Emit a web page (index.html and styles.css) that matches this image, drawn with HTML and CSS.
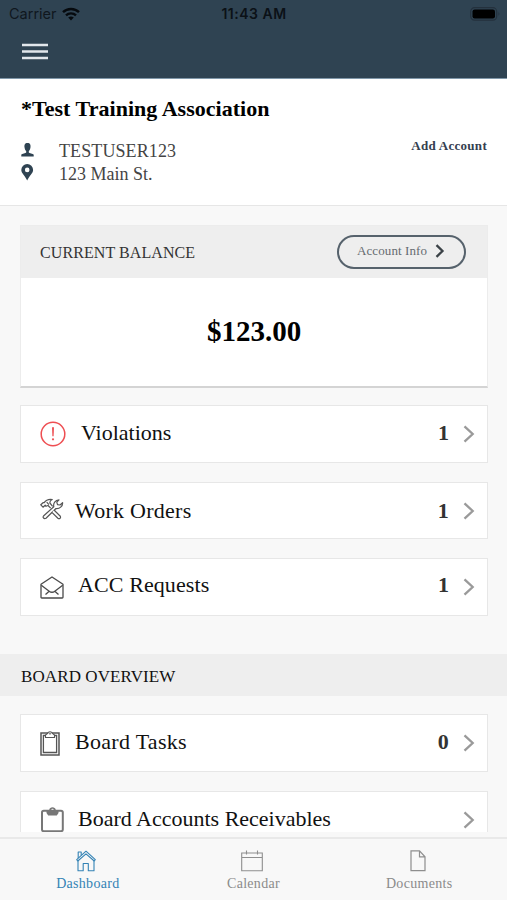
FILE: index.html
```html
<!DOCTYPE html>
<html lang="en">
<head>
<meta charset="utf-8">
<title>Dashboard</title>
<link rel="stylesheet" href="styles.css">
</head>
<body>
<div class="app">
  <header class="topbar">
    <div class="status">
      <div class="carrier"><span>Carrier</span>
        <svg width="18" height="14" viewBox="0 0 18 14"><g fill="none" stroke="#060a0e" stroke-width="2.4"><path d="M1 5.2C5.4.9 12.6.9 17 5.2"/><path d="M4 8.4C6.8 5.7 11.2 5.7 14 8.4"/></g><path d="M6.2 10.6Q9 8.2 11.8 10.6L9 13.6z" fill="#060a0e"/></svg>
      </div>
      <div class="clock">11:43 AM</div>
      <div class="power"><svg width="32" height="14" viewBox="0 0 32 14"><rect x="1.700" y=".7" width="26" height="12.4" rx="3.8" fill="none" stroke="#24313d" stroke-width="1.2"/><rect x="3.500" y="2.4" width="22.500" height="9" rx="2.2" fill="#000"/><path d="M29.500 4.8q1.8 2 0 4.2z" fill="#24313d"/></svg></div>
    </div>
    <button class="menu" aria-label="Menu"><svg width="26" height="18" viewBox="0 0 26 18"><path d="M0 2H26M0 8.500H26M0 15H26" stroke="#e2e7ec" stroke-width="2.700"/></svg></button>
  </header>

  <main class="content">
    <section class="profile">
      <div class="details">
        <h1>*Test Training Association</h1>
        <div class="line user"><svg width="13" height="14" viewBox="0 0 13 14"><path d="M6.5 0C3.7 0 3.3 2 3.5 4.2 3.7 6.200 4.500 7.300 5.200 8.200V9.600C4.800 10.500 1 10.600.3 11.700V13.500H12.700V11.700C12 10.600 8.200 10.500 7.800 9.600V8.200C8.500 7.300 9.300 6.200 9.500 4.200 9.700 2 9.300 0 6.500 0z" fill="#2f4352"/></svg><span>TESTUSER123</span></div>
        <div class="line address"><svg width="13" height="17" viewBox="0 0 13 17"><path fill-rule="evenodd" d="M6.200 0A5.900 5.900 0 0 0 .3 5.900C.3 9.300 4.300 11.700 6.200 16.500 8.100 11.700 12.100 9.300 12.100 5.900A5.900 5.900 0 0 0 6.200 0zM6.200 3.600a2.300 2.300 0 1 1 0 4.600 2.300 2.300 0 0 1 0-4.600z" fill="#2f4352"/></svg><span>123 Main St.</span></div>
      </div>
      <a class="add">Add Account</a>
    </section>

    <section class="balance">
      <div class="balance-head">
        <h2>CURRENT BALANCE</h2>
        <a class="info"><span>Account Info</span><svg width="10" height="14" viewBox="0 0 10 14"><path d="M1.500 1.200 7.500 7 1.500 12.800" fill="none" stroke="#3b4247" stroke-width="2.300"/></svg></a>
      </div>
      <div class="amount">$123.00</div>
    </section>

    <ul class="rows summary">
      <li class="row violations">
        <svg class="icon" width="26" height="26" viewBox="0 0 26 26"><circle cx="13" cy="13" r="11.800" fill="none" stroke="#ee4e52" stroke-width="1.500"/><path d="M12 6.300h2l-.4 9h-1.200z" fill="#ee4e52"/><circle cx="13" cy="18.300" r="1.100" fill="#ee4e52"/></svg>
        <span class="label">Violations</span><b>1</b>
        <svg class="chev" width="12" height="18" viewBox="0 0 12 18"><path d="M1.500 1.300 9.700 9 1.500 16.700" fill="none" stroke="#9a9a9a" stroke-width="2.300"/></svg>
      </li>
      <li class="row orders">
        <svg class="icon" width="24" height="22" viewBox="0 0 24 22"><g fill="#fff" stroke="#555" stroke-width="1.200" stroke-linejoin="round"><path d="M3.500 18 13.800 8.700C13 5.500 15.200 2 19 1.800L16.800 4.200 17.500 6.700 20 7 22.600 4.700C22.900 8.200 19.500 11 16 10.500L6 20.200Q4.500 21 3.500 20 2.700 19 3.500 18z"/><path d="M10.700 10.200 8 7.500 6 8.300 5.200 7.200 3 9.200.8 6.800 3.300 4.500 4.200 4.600C6 1.900 9 1 12.300 1.500 10.500 2.200 9.700 3.200 9.900 5L12.600 8.300M14 12 20.300 18.200Q20.900 19.500 20 20.400 18.900 21.100 17.900 20.300L11.900 14.400"/><path d="m6.700 4.200 2.200 2.400"/></g></svg>
        <span class="label">Work Orders</span><b>1</b>
        <svg class="chev" width="12" height="18" viewBox="0 0 12 18"><path d="M1.500 1.300 9.700 9 1.500 16.700" fill="none" stroke="#9a9a9a" stroke-width="2.300"/></svg>
      </li>
      <li class="row requests">
        <svg class="icon" width="24" height="23" viewBox="0 0 24 23"><g fill="none" stroke="#4a4a4a" stroke-width="1.300" stroke-linejoin="round"><path d="M1 8.300 12 1 23 8.300V21.200Q23 22 22.200 22H1.800Q1 22 1 21.200z"/><path d="M1.300 9.200 9.200 15.200Q12 17.300 14.800 15.200L22.700 9.200M5.500 18.500 9.200 15.200M14.800 15.200 18.500 18.500"/></g></svg>
        <span class="label">ACC Requests</span><b>1</b>
        <svg class="chev" width="12" height="18" viewBox="0 0 12 18"><path d="M1.500 1.300 9.700 9 1.500 16.700" fill="none" stroke="#9a9a9a" stroke-width="2.300"/></svg>
      </li>
    </ul>

    <h2 class="band">BOARD OVERVIEW</h2>

    <ul class="rows board">
      <li class="row tasks">
        <svg class="icon" width="20" height="25" viewBox="0 0 20 25"><g fill="none" stroke="#555"><path d="M1 2H19V24H1z" stroke-width="1.500"/><path d="M3.400 4.500H16.600V21.500H3.400z" stroke-width="1.300"/><path d="M5.500 6.500V4L7.500 2.500Q8.300.7 10 .7T12.500 2.500L14.500 4V6.500z" fill="#fff" stroke-width="1.100"/><circle cx="10" cy="2.600" r=".7" stroke-width=".8"/></g></svg>
        <span class="label">Board Tasks</span><b>0</b>
        <svg class="chev" width="12" height="18" viewBox="0 0 12 18"><path d="M1.500 1.300 9.700 9 1.500 16.700" fill="none" stroke="#9a9a9a" stroke-width="2.300"/></svg>
      </li>
      <li class="row receivables">
        <svg class="icon" width="25" height="26" viewBox="0 0 25 26"><rect x="2" y="3.700" width="20.800" height="20.500" rx="1.800" fill="#fff" stroke="#777" stroke-width="2"/><path fill-rule="evenodd" d="M6.500 3H9.200C9.500-.7 15.500-.7 15.800 3H18.500V6L16.800 8.500H8.200L6.500 6zM12.500 1.700a1.200 1.200 0 1 0 0 2.400 1.200 1.200 0 0 0 0-2.400z" fill="#777"/></svg>
        <span class="label">Board Accounts Receivables</span>
        <svg class="chev" width="12" height="18" viewBox="0 0 12 18"><path d="M1.500 1.300 9.700 9 1.500 16.700" fill="none" stroke="#9a9a9a" stroke-width="2.300"/></svg>
      </li>
    </ul>
  </main>

  <nav class="tabs">
    <a class="tab active"><svg width="20" height="22" viewBox="0 0 20 22"><g fill="none" stroke="#3483b5" stroke-width="1.100" stroke-linejoin="round"><path d="M2 10.500V20.700H7.200V13.500H12.300V20.700H18V10.500"/><path d="M.7 9.600 10 1.200 19.300 9.600 18.200 11 10 3.800 1.800 11z"/><path d="M2.200 8V2H5.200V5.300"/></g></svg><span>Dashboard</span></a>
    <a class="tab"><svg width="22" height="22" viewBox="0 0 22 22"><path d="M.7 3H21.300V20.700H.7zM.7 7.500H21.300M5.500.5V4.500M16.500.5V4.500" fill="none" stroke="#8e8e8e" stroke-width="1.100"/></svg><span>Calendar</span></a>
    <a class="tab"><svg width="16" height="22" viewBox="0 0 16 22"><path d="M1 .8H9.500L15 6.800V20.700H1zM9.500.8V6.800H15M9.500.8 15 6.800" fill="none" stroke="#8e8e8e" stroke-width="1.200"/></svg><span>Documents</span></a>
  </nav>
</div>
</body>
</html>
```
FILE: styles.css
```css
* { box-sizing: border-box; }
body { margin: 0; font-family: "Liberation Serif", serif; color: #111; }
svg { display: block; flex: none; }
h1, h2, ul { margin: 0; padding: 0; }
.app { width: 507px; height: 900px; display: flex; flex-direction: column; overflow: hidden; background: #f8f8f8; }

.topbar { flex: none; height: 79px; background: #2f4352; border-bottom: 1px solid #8097a9; }
.status { height: 27px; display: grid; grid-template-columns: 1fr auto 1fr; align-items: center; padding: 0 6px 0 9px; font: 14.500px Inter, sans-serif; color: #0b1117; }
.carrier { display: flex; align-items: center; gap: 6px; color: #10171e; letter-spacing: 0; }
.carrier svg { margin-left: -1px; }
.clock { font-weight: 600; font-size: 14px; letter-spacing: .5px; padding-right: 2px; }
.power { display: flex; justify-content: flex-end; }
.menu { display: block; margin: 16px 0 0 22px; padding: 0; border: 0; background: none; }

.content { flex: none; height: 753px; overflow: hidden; }
.profile { height: 127px; background: #fff; border-bottom: 1px solid #e6e6e6; display: flex; justify-content: space-between; padding: 16px 20px 0 21px; }
h1 { font-size: 22px; line-height: 27px; letter-spacing: .03px; color: #000; margin-bottom: 16px; }
.line { display: flex; align-items: center; height: 23px; font-size: 18px; line-height: 23px; letter-spacing: .1px; color: #444; }
.address { letter-spacing: 0; }
.line svg { margin-right: 25px; }
.line span { padding-top: 3px; }
.add { font-size: 13px; font-weight: bold; line-height: 16px; letter-spacing: .28px; color: #34404f; margin-top: 43px; }

.balance { margin: 19px 19px 0 20px; height: 163px; background: #fff; border: 1px solid #ececec; border-bottom: 2px solid #d4d4d4; }
.balance-head { height: 52px; background: #eee; display: flex; justify-content: space-between; align-items: center; padding: 0 21px 0 19px; }
.balance-head h2 { font-size: 16px; font-weight: normal; letter-spacing: .08px; color: #333; padding-top: 2px; }
.info { width: 129px; height: 34px; border: 2px solid #56626c; border-radius: 17px; display: flex; align-items: center; padding: 0 0 2px 18px; gap: 8px; font-size: 13px; letter-spacing: .1px; color: #666b70; }
.amount { font-size: 29px; font-weight: bold; line-height: 106px; text-align: center; color: #000; }

.rows { list-style: none; margin: 0 19px 0 20px; display: flex; flex-direction: column; }
.summary { margin-top: 17px; gap: 19px; }
.row { height: 58px; border: 1px solid #e7e7e7; background: #fff; display: flex; align-items: center; padding: 0 12px 0 19px; font-size: 22px; }
.label { flex: 1; line-height: 26px; padding-bottom: 2px; }
.row b { color: #333; line-height: 26px; padding-bottom: 2px; margin-right: 14px; }
.violations .icon { margin-right: 15px; }
.orders { height: 57px; letter-spacing: .25px; }
.orders .icon { margin: 0 11px 4px 0; }
.orders .label, .orders b { padding-bottom: 0; }
.requests { letter-spacing: .1px; }
.requests .icon { margin-right: 14px; }
.requests .label, .requests b { padding-bottom: 4px; }
.band { margin-top: 38px; height: 42px; padding-left: 21px; background: #eee; font-size: 17px; line-height: 45px; font-weight: normal; letter-spacing: .1px; }
.board { margin-top: 18px; gap: 19px; }
.tasks { letter-spacing: .3px; }
.tasks .icon { margin-right: 15px; }
.receivables .icon { margin-right: 13px; }

.tabs { flex: none; margin-top: 5px; height: 63px; border-top: 2px solid #e9e9e9; display: grid; grid-template-columns: repeat(3, 1fr); padding: 11px 5px 0 5px; }
.tab { display: flex; flex-direction: column; align-items: center; gap: 3px; font-size: 14px; line-height: 18px; letter-spacing: .3px; color: #8b8b8b; }
.tab svg { margin-right: 3px; }
.tab.active { color: #3483b5; }
```
